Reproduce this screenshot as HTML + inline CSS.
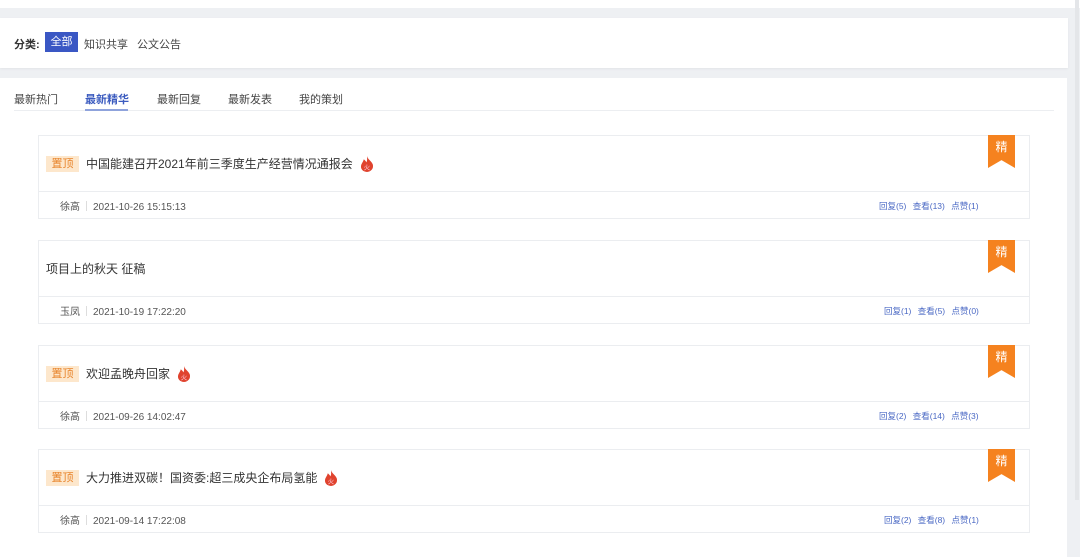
<!DOCTYPE html>
<html><head><meta charset="utf-8"><style>
*{margin:0;padding:0;box-sizing:border-box}
body{width:1080px;height:557px;overflow:hidden;background:#eef0f3;font-family:"Liberation Sans","Noto Sans CJK SC",sans-serif;position:relative;color:#333}
.abs{position:absolute}
.card{position:absolute;left:38px;width:992px;height:84px;border:1px solid #ebedf0;background:#fff}
.card .t{position:absolute;left:7px;top:0;height:55px;display:flex;align-items:center;font-size:12px;color:#333}
.tag{display:inline-block;width:33px;height:16px;line-height:16px;text-align:center;background:#fde7cc;color:#e8842b;font-size:11px;margin-right:7px}
.card .f{position:absolute;left:0;right:0;top:55px;height:28px;border-top:1px solid #ebedf0;font-size:10px;color:#555}
.f .a{position:absolute;left:21px;top:6px}
.f .sep{display:inline-block;width:1px;height:10px;background:#ddd;margin:0 6px;vertical-align:-1px}
.f .r{position:absolute;top:8px;font-size:8.5px;color:#4a68c4;word-spacing:4px}
.rib{position:absolute;right:14px;top:-1px;width:27px;height:33px;background:#f5821f;clip-path:polygon(0 0,100% 0,100% 100%,50% 76%,0 100%);color:#fff;font-size:12px;text-align:center;padding-top:3px}
.fire{display:inline-block;margin-left:6px;width:16px;height:18px}
</style></head><body>
<div class="abs" style="left:0;top:0;width:1080px;height:8px;background:#fff"></div>
<div class="abs" style="left:0;top:18px;width:1068px;height:50px;background:#fff;box-shadow:0 1px 2px #e3e5e8"></div>
<div class="abs" style="left:14px;top:36px;font-size:11px;font-weight:bold;color:#333">分类:</div>
<div class="abs" style="left:45px;top:32px;width:33px;height:20px;background:#3a57c4;color:#fff;font-size:11px;line-height:21px;text-align:center">全部</div>
<div class="abs" style="left:84px;top:36px;font-size:11px;color:#444">知识共享</div>
<div class="abs" style="left:137px;top:36px;font-size:11px;color:#444">公文公告</div>
<div class="abs" style="left:0;top:78px;width:1067px;height:479px;background:#fff"></div>
<div class="abs" style="left:1075px;top:0;width:4px;height:500px;background:#e4e6e9"></div>
<div class="abs" style="left:14px;top:110px;width:1040px;height:1px;background:#eceef1"></div>
<div class="abs" style="left:14px;top:91px;font-size:11px;color:#444">最新热门</div>
<div class="abs" style="left:85px;top:91px;font-size:11px;color:#3b5bbf;font-weight:bold">最新精华</div>
<div class="abs" style="left:85px;top:109px;width:43px;height:2px;background:#8fa3dc"></div>
<div class="abs" style="left:157px;top:91px;font-size:11px;color:#444">最新回复</div>
<div class="abs" style="left:228px;top:91px;font-size:11px;color:#444">最新发表</div>
<div class="abs" style="left:299px;top:91px;font-size:11px;color:#444">我的策划</div>

<div class="card" style="top:135px"><div class="t"><span class="tag">置顶</span>中国能建召开2021年前三季度生产经营情况通报会<svg class="fire" viewBox="0 0 15 17"><path d="M7.5 1C8 4 12 6 13 9c1 4-2 7-5.5 7S1 13.5 2 9.5C3 7 4 6 4.5 4 6 5.5 6.5 6 7 7 8 5 7.5 3 7.5 1z" fill="#e0432e"/><text x="7.5" y="13.5" font-size="6" fill="#fcd" text-anchor="middle">火</text></svg></div><div class="f"><span class="a">徐高<span class="sep"></span>2021-10-26 15:15:13</span><span class="r" style="left:840px">回复(5) 查看(13) 点赞(1)</span></div><div class="rib">精</div></div>

<div class="card" style="top:240px"><div class="t">项目上的秋天 征稿</div><div class="f"><span class="a">玉凤<span class="sep"></span>2021-10-19 17:22:20</span><span class="r" style="left:845px">回复(1) 查看(5) 点赞(0)</span></div><div class="rib">精</div></div>

<div class="card" style="top:345px"><div class="t"><span class="tag">置顶</span>欢迎孟晚舟回家<svg class="fire" viewBox="0 0 15 17"><path d="M7.5 1C8 4 12 6 13 9c1 4-2 7-5.5 7S1 13.5 2 9.5C3 7 4 6 4.5 4 6 5.5 6.5 6 7 7 8 5 7.5 3 7.5 1z" fill="#e0432e"/><text x="7.5" y="13.5" font-size="6" fill="#fcd" text-anchor="middle">火</text></svg></div><div class="f"><span class="a">徐高<span class="sep"></span>2021-09-26 14:02:47</span><span class="r" style="left:840px">回复(2) 查看(14) 点赞(3)</span></div><div class="rib">精</div></div>

<div class="card" style="top:449px"><div class="t"><span class="tag">置顶</span>大力推进双碳！国资委:超三成央企布局氢能<svg class="fire" viewBox="0 0 15 17"><path d="M7.5 1C8 4 12 6 13 9c1 4-2 7-5.5 7S1 13.5 2 9.5C3 7 4 6 4.5 4 6 5.5 6.5 6 7 7 8 5 7.5 3 7.5 1z" fill="#e0432e"/><text x="7.5" y="13.5" font-size="6" fill="#fcd" text-anchor="middle">火</text></svg></div><div class="f"><span class="a">徐高<span class="sep"></span>2021-09-14 17:22:08</span><span class="r" style="left:845px">回复(2) 查看(8) 点赞(1)</span></div><div class="rib">精</div></div>
</body></html>
